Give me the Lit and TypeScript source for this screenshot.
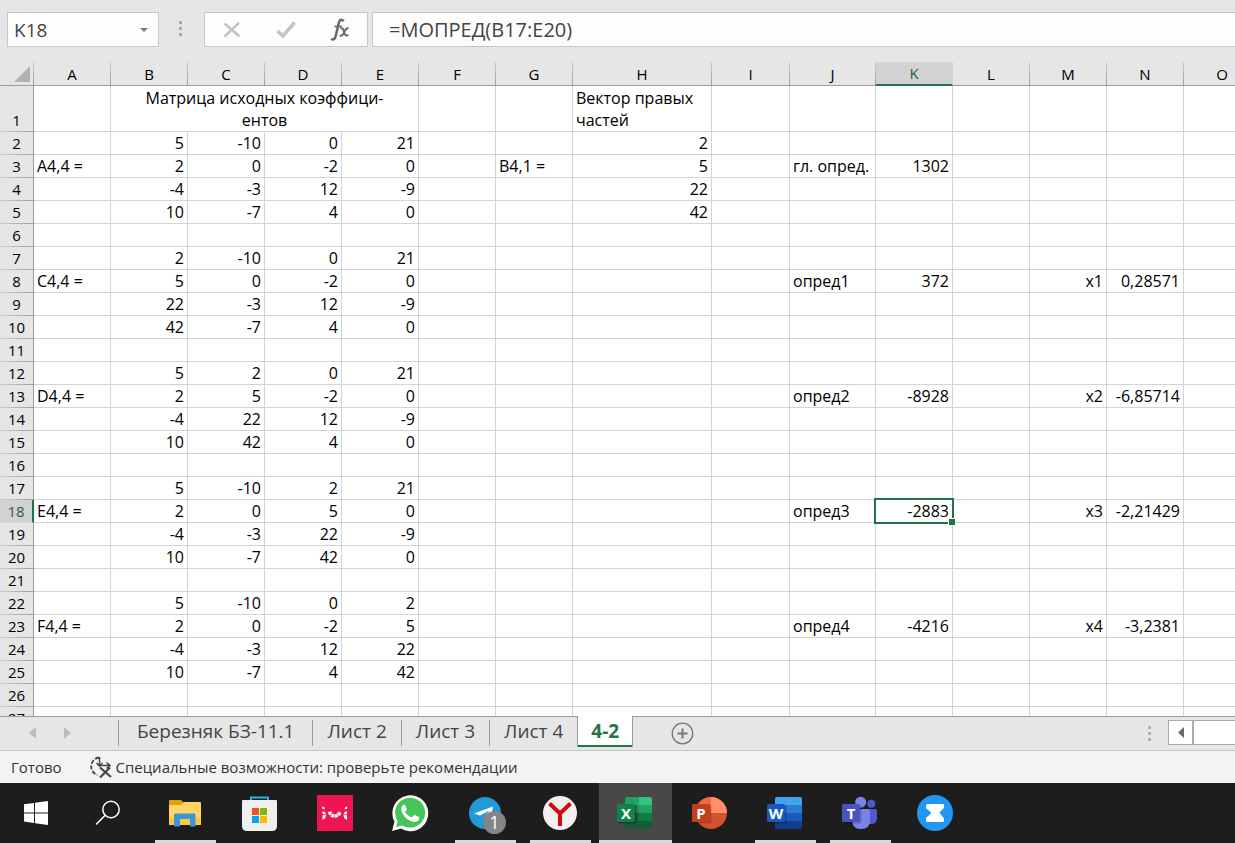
import { LitElement, html, svg, css, nothing, TemplateResult } from "lit";
import { customElement, state } from "lit/decorators.js";
import { classMap } from "lit/directives/class-map.js";

interface Column {
  name: string;
  width: number;
}

const COLUMNS: Column[] = [
  { name: "A", width: 77 },
  { name: "B", width: 77 },
  { name: "C", width: 77 },
  { name: "D", width: 77 },
  { name: "E", width: 77 },
  { name: "F", width: 77 },
  { name: "G", width: 77 },
  { name: "H", width: 139 },
  { name: "I", width: 78 },
  { name: "J", width: 86 },
  { name: "K", width: 77 },
  { name: "L", width: 77 },
  { name: "M", width: 77 },
  { name: "N", width: 77 },
  { name: "O", width: 77 },
];
const HEADER_WIDTH = 34;
const TABLE_WIDTH = COLUMNS.reduce((sum, c) => sum + c.width, HEADER_WIDTH);
const ROW_COUNT = 27;

const CELLS: Record<string, string> = {
  A3: "A4,4 =",
  A8: "C4,4 =",
  A13: "D4,4 =",
  A18: "E4,4 =",
  A23: "F4,4 =",
  G3: "B4,1 =",
  H2: "2",
  H3: "5",
  H4: "22",
  H5: "42",
  J3: "гл. опред.",
  K3: "1302",
  J8: "опред1",
  K8: "372",
  J13: "опред2",
  K13: "-8928",
  J18: "опред3",
  K18: "-2883",
  J23: "опред4",
  K23: "-4216",
  M8: "x1",
  N8: "0,28571",
  M13: "x2",
  N13: "-6,85714",
  M18: "x3",
  N18: "-2,21429",
  M23: "x4",
  N23: "-3,2381",
};

const MATRICES: Record<number, number[][]> = {
  2: [[5, -10, 0, 21], [2, 0, -2, 0], [-4, -3, 12, -9], [10, -7, 4, 0]],
  7: [[2, -10, 0, 21], [5, 0, -2, 0], [22, -3, 12, -9], [42, -7, 4, 0]],
  12: [[5, 2, 0, 21], [2, 5, -2, 0], [-4, 22, 12, -9], [10, 42, 4, 0]],
  17: [[5, -10, 2, 21], [2, 0, 5, 0], [-4, -3, 22, -9], [10, -7, 42, 0]],
  22: [[5, -10, 0, 2], [2, 0, -2, 5], [-4, -3, 12, 22], [10, -7, 4, 42]],
};
for (const [start, rows] of Object.entries(MATRICES)) {
  rows.forEach((row, r) =>
    row.forEach((value, c) => {
      CELLS["BCDE"[c] + (Number(start) + r)] = String(value);
    })
  );
}

@customElement("formula-bar")
export class FormulaBar extends LitElement {
  static styles = css`
    :host {
      display: flex;
      padding: 12px 0 15px 7px;
      background: #e6e6e6;
    }
    .box {
      display: flex;
      align-items: center;
      box-sizing: border-box;
      height: 35px;
      border: 1px solid #c6c6c6;
      background: #fdfdfd;
    }
    .name {
      width: 152px;
    }
    .actions {
      width: 164px;
      margin-right: 4px;
    }
    .formula {
      flex: 1;
      border-right: 0;
    }
    input {
      flex: 1;
      min-width: 0;
      border: 0;
      outline: 0;
      background: none;
      padding: 0 0 0 6px;
      font: 19px "Open Sans", "Noto Sans", sans-serif;
      color: #444;
    }
    .formula input {
      padding-left: 16px;
      font-size: 20px;
    }
    button {
      display: flex;
      align-items: center;
      justify-content: center;
      flex: 1;
      height: 100%;
      border: 0;
      padding: 0;
      background: none;
    }
    .name button {
      flex: 0 0 29px;
    }
    .grip {
      width: 45px;
      box-sizing: border-box;
      padding: 0 2px 2px 0;
      display: flex;
      justify-content: center;
      align-items: center;
    }
  `;

  render() {
    return html`
      <div class="box name">
        <input aria-label="Имя ячейки" value="K18" />
        <button aria-label="Список имён">
          <svg width="8" height="4" viewBox="0 0 8 4"><path d="M0 0h8L4 4z" fill="#777" /></svg>
        </button>
      </div>
      <div class="grip">
        <svg width="3" height="15" viewBox="0 0 3 15">
          <path d="M0 0h3v3H0zM0 6h3v3H0zM0 12h3v3H0z" fill="#a6a6a6" />
        </svg>
      </div>
      <div class="box actions">
        <button aria-label="Отмена">
          <svg width="18" height="16" viewBox="0 0 18 16">
            <path d="M1.500 1.500L16.500 14.500M16 .8L1.500 14.500" fill="none" stroke="#c3c3c3" stroke-width="2.500" />
          </svg>
        </button>
        <button aria-label="Ввод">
          <svg width="20" height="18" viewBox="0 0 20 18">
            <path d="M1.500 10L7 15L18.500 1.500" fill="none" stroke="#c3c3c3" stroke-width="3.500" />
          </svg>
        </button>
        <button aria-label="Вставить функцию">
          <svg width="20" height="24" viewBox="0 0 20 24">
            <path d="M13.500 3.500C12.500 1 9.800 1.200 8.900 4.500L5.700 18C5 21.200 3 22.300 1.300 20.800" fill="none" stroke="#6a6a6a" stroke-width="2.600" />
            <path d="M4.500 8.500H12" stroke="#6a6a6a" stroke-width="1.800" />
            <path d="M10.500 10.500C13 9.500 13.500 12 14.300 14.500S16 18.500 18.500 17M18.500 10.500C16 9.500 15 13 14 14.800S11.500 18.800 9.800 17.200" fill="none" stroke="#6a6a6a" stroke-width="2" />
          </svg>
        </button>
      </div>
      <div class="box formula">
        <input aria-label="Строка формул" value="=МОПРЕД(B17:E20)" />
      </div>
    `;
  }
}

@customElement("sheet-grid")
export class SheetGrid extends LitElement {
  @state() private selectedColumn = "K";
  @state() private selectedRow = 18;

  static styles = css`
    :host {
      display: block;
      overflow: hidden;
      background: #fff;
    }
    table {
      table-layout: fixed;
      border-collapse: separate;
      border-spacing: 0;
      font: 16px/22px "Open Sans", "Noto Sans", sans-serif;
      color: #000;
    }
    th,
    td {
      box-sizing: border-box;
      height: 23px;
      padding: 0 3px;
      border: 0 solid #d4d4d4;
      border-width: 0 1px 1px 0;
      font-weight: 400;
      text-align: right;
      vertical-align: bottom;
      white-space: nowrap;
    }
    th {
      padding: 0;
      text-align: center;
      font-size: 15px;
      background: #e6e6e6;
    }
    thead th {
      height: 24px;
      border-bottom-color: #9b9b9b;
      border-image: linear-gradient(#d0d0d0, #9b9b9b) 1;
    }
    thead th.corner {
      text-align: right;
    }
    .corner svg {
      display: block;
      margin: 0 3px 3px auto;
    }
    tbody th {
      border-image: linear-gradient(90deg, #d0d0d0, #9b9b9b) 1;
    }
    thead th.current {
      background: #d2d2d2;
      border-bottom: 2px solid #217346;
      border-image: none;
      line-height: 21px;
      color: #1c6240;
    }
    tbody th.current {
      background: #d2d2d2;
      border-right: 2px solid #217346;
      border-image: none;
      color: #1c6240;
    }
    .first {
      height: 46px;
    }
    .title {
      text-align: center;
    }
    .label {
      text-align: left;
    }
    .selected {
      position: relative;
    }
    .frame {
      position: absolute;
      inset: -2px;
      border: 2px solid #217346;
    }
    .frame::after {
      content: "";
      position: absolute;
      right: -3px;
      bottom: -3px;
      width: 6px;
      height: 6px;
      background: #217346;
      border: 1px solid #fff;
      border-width: 1px 0 0 1px;
    }
  `;

  private renderCell(column: string, row: number) {
    if (row === 1) {
      if (column === "B")
        return html`<td class="title" colspan="4">Матрица исходных коэффици-<br />ентов</td>`;
      if ("CDE".includes(column)) return nothing;
      if (column === "H") return html`<td class="label">Вектор правых<br />частей</td>`;
      return html`<td class="first"></td>`;
    }
    const text = CELLS[column + row] ?? "";
    const selected = column === this.selectedColumn && row === this.selectedRow;
    const label = "AGJ".includes(column);
    return html`<td
      class=${classMap({ label, selected })}
      @click=${() => {
        this.selectedColumn = column;
        this.selectedRow = row;
      }}
    >${text}${selected ? html`<div class="frame"></div>` : nothing}</td>`;
  }

  render() {
    const rows = Array.from({ length: ROW_COUNT }, (_, i) => i + 1);
    return html`
      <table style="width:${TABLE_WIDTH}px">
        <colgroup>
          <col style="width:${HEADER_WIDTH}px" />
          ${COLUMNS.map((c) => html`<col style="width:${c.width}px" />`)}
        </colgroup>
        <thead>
          <tr>
            <th class="corner">
              <svg width="16" height="16" viewBox="0 0 16 16"><path d="M16 0v16H0z" fill="#b1b1b1" /></svg>
            </th>
            ${COLUMNS.map(
              (c) => html`<th scope="col" class=${classMap({ current: c.name === this.selectedColumn })}>${c.name}</th>`
            )}
          </tr>
        </thead>
        <tbody>
          ${rows.map(
            (row) => html`<tr>
              <th scope="row" class=${classMap({ current: row === this.selectedRow })}>${row}</th>
              ${COLUMNS.map((c) => this.renderCell(c.name, row))}
            </tr>`
          )}
        </tbody>
      </table>
    `;
  }
}

@customElement("sheet-tabs")
export class SheetTabs extends LitElement {
  @state() private active = "4-2";

  static styles = css`
    :host {
      display: flex;
      height: 35px;
      background: #e6e6e6;
      border-top: 1px solid #9b9b9b;
      border-bottom: 1px solid #c6c6c6;
      box-sizing: border-box;
    }
    button {
      display: flex;
      align-items: center;
      justify-content: center;
      padding: 0;
      border: 0;
      background: none;
      color: #444;
      font: 19px/22px "Open Sans", "Noto Sans", sans-serif;
      white-space: nowrap;
    }
    .nav {
      display: flex;
      align-items: center;
      width: 118px;
      box-sizing: border-box;
      padding: 0 47px 2px 29px;
      justify-content: space-between;
    }
    .tab {
      height: 26px;
      margin-top: 3px;
      padding: 0 14px 4px;
      border-left: 1px solid #9b9b9b;
    }
    .tab.wide {
      padding: 0 18px 4px;
    }
    .tab.active {
      height: 31px;
      margin-top: -1px;
      padding: 0 13px 2px;
      background: #fff;
      border: 1px solid #9b9b9b;
      border-width: 0 1px 0 1px;
      box-shadow: inset 0 -2px #217346;
      color: #217346;
      font-weight: 700;
    }
    .add {
      margin-left: 38px;
      height: 32px;
    }
    .space {
      flex: 1;
    }
    .grip {
      align-self: center;
      margin-right: 17px;
    }
    .scroll {
      display: flex;
      width: 67px;
      height: 25px;
      margin-top: 3px;
      box-sizing: border-box;
      border: 1px solid #ababab;
      border-right: 0;
      background: #fff;
    }
    .scroll button {
      width: 25px;
      border-right: 2px solid #ababab;
    }
  `;

  render() {
    const tabs = ["Березняк БЗ-11.1", "Лист 2", "Лист 3", "Лист 4", "4-2"];
    return html`
      <div class="nav">
        <button aria-label="Предыдущий лист">
          <svg width="7" height="12" viewBox="0 0 7 12"><path d="M7 0v12L0 6z" fill="#bdbdbd" /></svg>
        </button>
        <button aria-label="Следующий лист">
          <svg width="7" height="12" viewBox="0 0 7 12"><path d="M0 0v12l7-6z" fill="#bdbdbd" /></svg>
        </button>
      </div>
      ${tabs.map(
        (t, i) => html`<button
          class=${classMap({ tab: true, wide: i === 0, active: t === this.active })}
          @click=${() => (this.active = t)}
        >${t}</button>`
      )}
      <button class="add" aria-label="Новый лист">
        <svg width="23" height="23" viewBox="0 0 23 23" fill="none" stroke="#777">
          <circle cx="11.500" cy="11.500" r="10.300" stroke-width="1.300" />
          <path d="M6.500 11.500h10M11.500 6.500v10" stroke-width="2" />
        </svg>
      </button>
      <div class="space"></div>
      <svg class="grip" width="3" height="15" viewBox="0 0 3 15">
        <path d="M0 0h3v3H0zM0 6h3v3H0zM0 12h3v3H0z" fill="#b1b1b1" />
      </svg>
      <div class="scroll">
        <button aria-label="Прокрутить влево">
          <svg width="6" height="11" viewBox="0 0 6 11"><path d="M6 0v11L0 5.500z" fill="#6a6a6a" /></svg>
        </button>
      </div>
    `;
  }
}

@customElement("status-bar")
export class StatusBar extends LitElement {
  static styles = css`
    :host {
      display: flex;
      align-items: center;
      height: 32px;
      padding-left: 11px;
      background: #f3f3f3;
      color: #333;
      font: 15px/20px "Open Sans", "Noto Sans", sans-serif;
    }
    button {
      display: flex;
      align-items: center;
      gap: 4px;
      margin-left: 28px;
      padding: 0;
      border: 0;
      background: none;
      color: inherit;
      font: inherit;
      white-space: nowrap;
    }
  `;

  render() {
    return html`
      <span>Готово</span>
      <button>
        <svg width="22" height="22" viewBox="0 0 22 22" fill="none" stroke="#444">
          <path d="M9 1.500A9 9 0 0 0 7.500 19" stroke-width="1.800" stroke-dasharray="4.200 1.600" />
          <path d="M9.500 1v9M6.500 7l3 3.200L12.500 7" stroke-width="1.500" />
          <path d="M9.500 9.500H19M16.500 6.500L20 9.500l-3.500 3" stroke-width="1.500" />
          <path d="M10 11.500L21 21M20 11.500L10 21.500" stroke-width="2.200" />
        </svg>
        Специальные возможности: проверьте рекомендации
      </button>
    `;
  }
}

const officeLetter = (letter: string) =>
  svg`<text x="9" y="23.500" text-anchor="middle" class="letter">${letter}</text>`;

const ICONS: Record<string, TemplateResult> = {
  start: svg`<path fill="#fff" d="M6 9.300L16 8v9.400H6zM17 7.800L30 6v11.400H17zM6 18.500h10V28L6 26.600zM17 18.500h13V30l-13-1.800z" />`,
  search: svg`<g fill="none" stroke="#fff" stroke-width="1.500"><circle cx="21" cy="14.500" r="8.200" /><path d="M15.200 20.300L6 29.500" /></g>`,
  folder: svg`
    <path d="M2 6q0-1 1-1h11l3 3v4H2z" fill="#e0a008" />
    <path d="M2 10h12l3-3h16q1 0 1 1v21q0 1-1 1H3q-1 0-1-1z" fill="#ffd565" />
    <path d="M2 23h32v6q0 1-1 1H3q-1 0-1-1z" fill="#fbc940" />
    <path d="M7 20q0-1.500 1.500-1.500h18.500q1.500 0 1.500 1.500v11.500h-5.500V24H13v7.500H7z" fill="#3a96dd" />`,
  store: svg`
    <path d="M9 8V2.500h17V8" fill="none" stroke="#27b5ea" stroke-width="2" />
    <path d="M0 6q0-1 1-1h33q1 0 1 1v25q0 5-5 5H5q-5 0-5-5z" fill="#efefef" />
    <path d="M10 13h7v7h-7z" fill="#f25022" /><path d="M18 13h7v7h-7z" fill="#7fba00" />
    <path d="M10 21h7v7h-7z" fill="#00a4ef" /><path d="M18 21h7v7h-7z" fill="#ffb900" />`,
  ivi: svg`
    <path d="M0 0h36v36H0z" fill="#ee1550" />
    <g fill="#fff">
      <path d="M5.200 11.200L7.500 12.500L7.800 14.200L5.500 14zM5.300 16.200L8 17L9 19.500L5.800 19.300zM5.800 20L9.200 20.200L8 23.500L5.300 24.800L5.500 22z" />
      <path d="M30.300 11.200L28 12.500L27.700 14.200L30 14zM30.200 16.200L27.500 17L26.500 19.500L29.700 19.300zM29.700 20L26.300 20.200L27.500 23.500L30.200 24.800L30 22z" />
    </g>
    <path d="M12.500 16.800A5.500 6 0 0 0 23 16.800" fill="none" stroke="#fff" stroke-width="3.600" stroke-dasharray="2.900 .6" />`,
  whatsapp: svg`
    <path d="M0 36l2.500-9.200A18 18 0 1 1 9 33.600z" fill="#fff" />
    <path d="M4 32l1.600-6.100A15 15 0 1 1 10.400 30.500z" fill="#45c657" />
    <path d="M12.600 9.500c-1.900.2-3.300 2-3.300 4.200c0 6.400 7.500 13.200 13.600 13.200c2.200 0 4.300-1.500 4.400-3.600c.1-1-.2-1.200-1-1.600l-3.300-1.500c-.8-.4-1.100-.2-1.500.4l-1.200 1.500c-.4.5-.8.500-1.400.2c-3-1.400-4.600-3.400-5.500-5c-.3-.5-.2-.8.200-1.200c.8-.8 1.200-1.500 1-2.200l-1.300-3.500c-.3-.7-.4-.9-.7-.9z" fill="#fff" />`,
  telegram: svg`
    <circle cx="18" cy="18" r="16" fill="#209bd8" />
    <path d="M7 18.500L24.500 12c1-.4 1.500.1 1.300 1L24 22L18 21L22.500 15.500L13 20.500z" fill="#fff" />
    <circle cx="27.500" cy="27.500" r="11.500" fill="#858585" />
    <text x="27.500" y="34" text-anchor="middle" class="count">1</text>`,
  yandex: svg`
    <circle cx="18" cy="18" r="17" fill="#f1f1f1" />
    <path d="M7.500 8.500L18 18.500L28.500 8.500M18 18v13" fill="none" stroke="#d50b0b" stroke-width="4" />`,
  excel: svg`
    <path d="M10 2h11.500v8H8V4q0-2 2-2z" fill="#21a366" /><path d="M21.500 2H33q2 0 2 2v6H21.500z" fill="#33c481" />
    <path d="M8 10h13.500v8H8z" fill="#1d9155" /><path d="M21.500 10H35v8H21.500z" fill="#21a366" />
    <path d="M8 18h13.500v8H8z" fill="#185c37" /><path d="M21.500 18H35v8H21.500z" fill="#107c41" />
    <path d="M8 26h27v6q0 2-2 2H10q-2 0-2-2z" fill="#185c37" />
    <rect x="1" y="10" width="18.500" height="18.500" rx="1.500" fill="#0005" />
    <rect y="9" width="18" height="18" rx="1.500" fill="#13824a" />${officeLetter("X")}`,
  powerpoint: svg`
    <circle cx="19" cy="18" r="16" fill="#d35230" />
    <path d="M19 2a16 16 0 0 1 16 16H19z" fill="#ff8f6b" /><path d="M19 2A16 16 0 0 0 3 18h16z" fill="#ed6c47" />
    <rect x="1" y="10" width="18.500" height="18.500" rx="1.500" fill="#0003" />
    <rect y="9" width="18" height="18" rx="1.500" fill="#c43e1c" />${officeLetter("P")}`,
  word: svg`
    <path d="M10 2h23q2 0 2 2v6H8V4q0-2 2-2z" fill="#41a5ee" />
    <path d="M8 10h27v8H8z" fill="#2b7cd3" /><path d="M8 18h27v8H8z" fill="#185abd" />
    <path d="M8 26h27v6q0 2-2 2H10q-2 0-2-2z" fill="#103f91" />
    <rect x="1" y="10" width="18.500" height="18.500" rx="1.500" fill="#0004" />
    <rect y="9" width="18" height="18" rx="1.500" fill="#185abd" />${officeLetter("W")}`,
  teams: svg`
    <circle cx="29.300" cy="8.700" r="4" fill="#5059c9" /><path d="M26 14h7.500q1.500 0 1.500 1.500V23q0 6-6 6h-3z" fill="#5059c9" />
    <circle cx="18.700" cy="7.200" r="5.500" fill="#7b83eb" /><path d="M10 14h16.500q1.500 0 1.500 1.500V25q0 9-9 9t-9-9z" fill="#7b83eb" />
    <rect x="1" y="10" width="18.500" height="18.500" rx="1.500" fill="#0003" />
    <rect y="9" width="18" height="18" rx="1.500" fill="#4b53bc" />${officeLetter("T")}`,
  hourglass: svg`
    <circle cx="18" cy="18" r="18" fill="#2196f3" />
    <path d="M10.500 9H26q1 0 1 1v2.200q0 .8-.6 1.400L23 17q-.7.800 0 1.600l3.300 3.800q.7.800.7 1.600v1.500q0 1.500-1.500 1.500H10q-1 0-1-1v-2.500q0-.8.600-1.300L13.500 19q.8-.9.200-1.800L9.500 13.500Q9 13 9 12.300V10.500Q9 9 10.500 9z" fill="#fff" />`,
};

const APPS = [
  { icon: "start", label: "Пуск", kind: "system" },
  { icon: "search", label: "Поиск", kind: "system" },
  { icon: "folder", label: "Проводник", kind: "app running" },
  { icon: "store", label: "Microsoft Store", kind: "app" },
  { icon: "ivi", label: "ivi", kind: "app" },
  { icon: "whatsapp", label: "WhatsApp", kind: "app" },
  { icon: "telegram", label: "Telegram", kind: "app running" },
  { icon: "yandex", label: "Яндекс Браузер", kind: "app running" },
  { icon: "excel", label: "Excel", kind: "app running active" },
  { icon: "powerpoint", label: "PowerPoint", kind: "app" },
  { icon: "word", label: "Word", kind: "app running" },
  { icon: "teams", label: "Teams", kind: "app running" },
  { icon: "hourglass", label: "Таймер", kind: "app" },
];

@customElement("task-bar")
export class TaskBar extends LitElement {
  static styles = css`
    :host {
      display: flex;
      gap: 2px;
      height: 60px;
      padding-left: 1px;
      background: #1d1d1d;
    }
    button {
      display: flex;
      align-items: center;
      justify-content: center;
      padding: 0;
      border: 0;
      background: none;
    }
    .system {
      width: 70px;
    }
    .app {
      width: 61px;
      margin: 0 6px;
      padding-right: 1px;
    }
    .system + .app {
      margin-left: 10px;
    }
    .running {
      box-shadow: inset 0 -3px #d9d9d9;
    }
    .active {
      width: 73px;
      margin: 0;
      background: #484848;
    }
    svg {
      overflow: visible;
    }
    .letter {
      font: bold 15px "Open Sans", "Noto Sans", sans-serif;
      fill: #fff;
    }
    .count {
      font: 18px "Open Sans", "Noto Sans", sans-serif;
      fill: #fff;
    }
  `;

  render() {
    return html`${APPS.map(
      (a) => html`<button class=${a.kind} aria-label=${a.label}>
        <svg width="36" height="36" viewBox="0 0 36 36">${ICONS[a.icon]}</svg>
      </button>`
    )}`;
  }
}

@customElement("app-root")
export class AppRoot extends LitElement {
  static styles = css`
    :host {
      display: flex;
      flex-direction: column;
      height: 100vh;
      overflow: hidden;
    }
    sheet-grid {
      flex: 1;
      min-height: 0;
    }
    formula-bar,
    sheet-tabs,
    status-bar,
    task-bar {
      flex-shrink: 0;
    }
  `;

  render() {
    return html`
      <formula-bar></formula-bar>
      <sheet-grid></sheet-grid>
      <sheet-tabs></sheet-tabs>
      <status-bar></status-bar>
      <task-bar></task-bar>
    `;
  }
}
